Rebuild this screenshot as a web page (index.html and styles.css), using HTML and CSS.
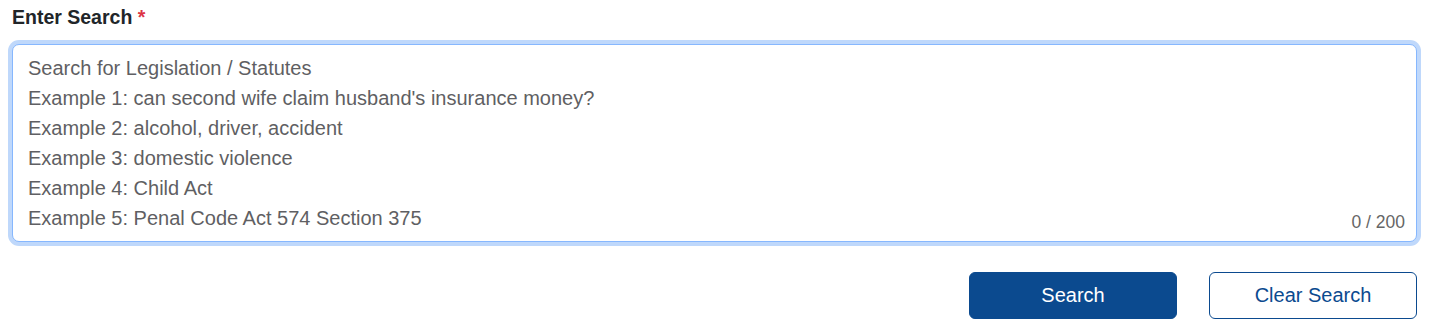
FILE: index.html
```html
<!DOCTYPE html>
<html>
<head>
<meta charset="utf-8">
<link rel="stylesheet" href="styles.css">
</head>
<body>
<div class="form">
  <label class="label" for="q">Enter Search <span class="req">*</span></label>
  <div class="field">
    <textarea id="q" class="input" placeholder="Search for Legislation / Statutes&#10;Example 1: can second wife claim husband's insurance money?&#10;Example 2: alcohol, driver, accident&#10;Example 3: domestic violence&#10;Example 4: Child Act&#10;Example 5: Penal Code Act 574 Section 375"></textarea>
    <span class="counter">0 / 200</span>
  </div>
  <div class="actions">
    <button class="btn btn-primary">Search</button>
    <button class="btn btn-outline">Clear Search</button>
  </div>
</div>
</body>
</html>
```
FILE: styles.css
```css
html, body {
  margin: 0;
  padding: 0;
  background: #fff;
  font-family: "Liberation Sans", Arial, sans-serif;
}
.form {
  padding: 6px 18px 0 12px;
  display: flex;
  flex-direction: column;
}
.label {
  font-size: 19.5px;
  font-weight: bold;
  color: #212529;
  line-height: 22px;
  margin-bottom: 16px;
}
.req {
  color: #dc3545;
}
.field {
  position: relative;
}
.input {
  display: block;
  box-sizing: border-box;
  width: 100%;
  height: 198px;
  margin: 0;
  padding: 8px 15px;
  border: 1px solid #86b7fe;
  border-radius: 7px;
  box-shadow: 0 0 0 4px #bfd8fb;
  outline: none;
  resize: none;
  font-family: "Liberation Sans", Arial, sans-serif;
  font-size: 20px;
  line-height: 30px;
  color: #212529;
  overflow: hidden;
}
.input::placeholder {
  color: #5f5f63;
  opacity: 1;
}
.counter {
  position: absolute;
  right: 12px;
  bottom: 9px;
  font-size: 17.5px;
  color: #666;
}
.actions {
  display: flex;
  justify-content: flex-end;
  gap: 32px;
  margin-top: 30px;
}
.btn {
  width: 208px;
  height: 47px;
  border-radius: 6px;
  font-family: "Liberation Sans", Arial, sans-serif;
  font-size: 20px;
  cursor: pointer;
}
.btn-primary {
  background: #0b4a8f;
  border: 1px solid #0b4a8f;
  color: #fff;
}
.btn-outline {
  background: #fff;
  border: 1px solid #0b4a8f;
  color: #0b4a8f;
}
```
